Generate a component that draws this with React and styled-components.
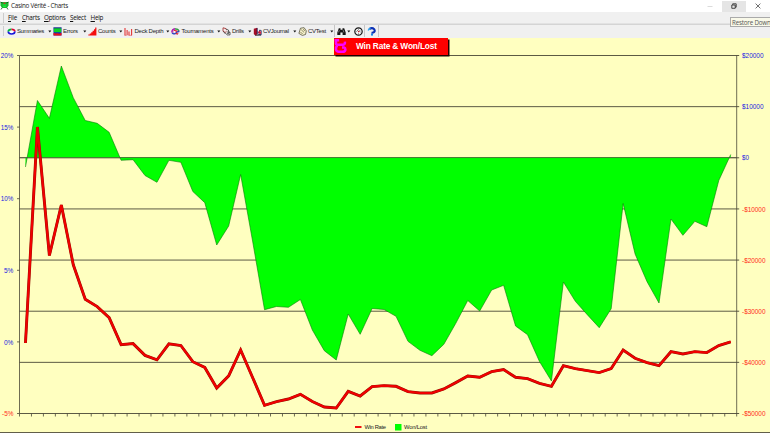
import React from "react";
import styled, { createGlobalStyle } from "styled-components";

const GlobalStyle = createGlobalStyle`
  body {
    margin: 0;
    overflow: hidden;
    background: #ffffc0;
  }
`;

const Window = styled.div`
  display: flex;
  flex-direction: column;
  position: relative;
  width: 770px;
  height: 433px;
  overflow: hidden;
  font-family: "Liberation Sans", Arial, sans-serif;
  white-space: nowrap;
`;

const TitleBar = styled.header`
  display: flex;
  flex: none;
  height: 12px;
  align-items: center;
  background: #fff;
`;

const AppTitle = styled.div`
  flex: 1;
  padding-left: 2px;
  font-family: "Open Sans", "Noto Sans", sans-serif;
  font-size: 6.3px;
  letter-spacing: -0.27px;
  line-height: 12px;
  color: #222;
`;

const WindowButton = styled.div`
  display: flex;
  width: 24px;
  height: 11px;
  justify-content: center;
  align-items: center;
  background: ${(props) => (props.$active ? "#e5e5e5" : "transparent")};
`;

const MenuBar = styled.nav`
  display: flex;
  flex: none;
  box-sizing: border-box;
  height: 12px;
  padding-left: 3px;
  align-items: center;
  background: #f0f0f0;
  border-bottom: 1px solid #e2e2e2;
`;

const MenuItem = styled.div`
  width: ${(props) => props.$width}px;
  font-family: "Open Sans", "Noto Sans", sans-serif;
  font-size: 6.3px;
  letter-spacing: -0.25px;
  line-height: 12px;
  color: #111;
`;

const Mnemonic = styled.span`
  text-decoration: underline;
  text-decoration-thickness: 0.5px;
`;

const ToolBar = styled.nav`
  display: flex;
  flex: none;
  box-sizing: border-box;
  height: 14px;
  padding: 0 0 1px 3px;
  align-items: center;
  background: #f0f0f0;
  border-top: 1px solid #d4d4d4;
`;

const Grip = styled.div`
  width: 1px;
  height: 10px;
  margin-right: ${(props) => props.$gap}px;
  background: #ccc;
`;

const Tool = styled.div`
  display: flex;
  box-sizing: border-box;
  width: ${(props) => props.$width}px;
  height: 12px;
  align-items: center;
  padding-right: ${(props) => props.$end || 0}px;
  border-right: ${(props) => (props.$divided ? "1px solid #c6c6c6" : "none")};
`;

const ToolLabel = styled.div`
  flex: 1;
  padding-left: 1.5px;
  font-size: 6px;
  letter-spacing: ${(props) => props.$spacing || -0.25}px;
  line-height: 12px;
  color: #222;
`;

const ChartArea = styled.main`
  flex: 1;
  background: #ffffc0;
`;

const ChartSvg = styled.svg`
  display: block;
  font-family: "Liberation Sans", Arial, sans-serif;
`;

const AxisText = styled.text`
  font-size: 7.6px;
  fill: ${(props) => (props.$negative ? "#ff2a18" : "#2020e0")};
`;

const LegendText = styled.text`
  font-size: 5.8px;
  fill: #222;
`;

const Banner = styled.div`
  display: flex;
  position: absolute;
  left: 334px;
  top: 38px;
  width: 113.5px;
  height: 16.5px;
  align-items: center;
  background: #f00;
  box-shadow: 1.5px 1.5px 0 #200;
  color: #fff;
`;

const BannerText = styled.div`
  padding-left: 9px;
  font-size: 8.3px;
  font-weight: bold;
  letter-spacing: -0.15px;
  line-height: 16px;
`;

const Tooltip = styled.div`
  position: absolute;
  box-sizing: border-box;
  left: 730px;
  top: 17px;
  width: 40px;
  height: 10px;
  padding-left: 1px;
  border: 1px solid #aaa;
  border-right: none;
  background: #f9f9e9;
  font-family: "Open Sans", "Noto Sans", sans-serif;
  font-size: 6.2px;
  letter-spacing: -0.17px;
  line-height: 9px;
  color: #555;
`;

const Icon = ({ children, width = 9 }) => (
  <svg width={width} height="9" viewBox={`0 0 ${width} 9`}>
    {children}
  </svg>
);

const Arrow = () => (
  <svg width="4" height="3" viewBox="0 0 4 3">
    <path d="M.3 .6h3L1.8 2.4z" fill="#111" />
  </svg>
);

const AppIcon = () => (
  <svg width="9" height="10" viewBox="0 0 9 10">
    <path d="M0.5 1h8v3.5l-1.5 2.5h-5l-1.5-2.5z" fill="#18b832" />
    <path d="M0.5 1l2 1M8.5 1l-2 1M2 7l-1 1.5M7 7l1 1.5" stroke="#064818" strokeWidth="0.8" />
    <path d="M3 1.8h3l-1.5 1.5z" fill="#e82020" />
    <path d="M2.5 4h4M3 5.5h3" stroke="#16ee3b" />
  </svg>
);

const SummariesIcon = () => (
  <Icon>
    <ellipse cx="4.5" cy="4.7" rx="3" ry="2" fill="#fff" />
    <g fill="none" strokeWidth="1.7">
      <path d="M1.2 4.7C1.4 2.6 3 2.3 4.5 2.3" stroke="#00b83c" />
      <path d="M4.5 2.3C6.7 2.3 7.8 3.4 7.8 4.6" stroke="#e00030" />
      <path d="M7.8 4.6C7.8 6.2 6.4 7 4.6 7S1.4 6.2 1.2 4.7" stroke="#1515db" />
    </g>
  </Icon>
);

const ErrorsIcon = () => (
  <Icon>
    <rect x="0.5" y="0.5" width="8" height="8" fill="#1f28b8" />
    <path d="M0.8 1.2h7.4v4H.8z" fill="#08d426" />
    <path d="M0.5 5.8l2 .7 2-.3 2 .5 2-.9v2.7h-8z" fill="#ee1010" />
    <path d="M.5 .8h8" stroke="#102c70" strokeWidth=".6" />
  </Icon>
);

const CountsIcon = () => (
  <Icon>
    <path d="M0.3 8.5v-1h1.5V6.4h1.4V5.2h1.4V3.7H6V2.2h1.2V.6h1.2v7.9z" fill="#f40d0d" />
  </Icon>
);

const DeckIcon = () => (
  <Icon>
    <path d="M1 8.3V1M3.1 8.3V3M5 8.3V4.4M7.6 8.3V2" stroke="#e33636" strokeWidth="1.1" />
    <path d="M0.5 8.3h2M4.5 8.3H8" stroke="#e33636" strokeWidth="0.6" />
  </Icon>
);

const TournamentsIcon = () => (
  <Icon>
    <ellipse cx="4.5" cy="4.4" rx="4" ry="3" fill="#d6a4c8" />
    <path d="M0.9 5.6Q1 2 4 1.8" fill="none" stroke="#b01db5" strokeWidth="1.5" />
    <path d="M4 1.8q3-.2 4 2" fill="none" stroke="#24a83c" strokeWidth="1.3" />
    <path d="M1 5.9q2 2 4 0T8.4 4.4" fill="none" stroke="#2747c3" strokeWidth="1.2" />
    <path d="M3 3.4l3 1M5 6.4l2 .7" stroke="#e82727" strokeWidth="1.3" />
    <circle cx="3.6" cy="4.8" r=".9" fill="#fff" />
  </Icon>
);

const DrillsIcon = () => (
  <Icon>
    <path d="M1 .8l3 .8 1 3-2 .8-2-1.3z" fill="#f5ecec" stroke="#9b2525" strokeWidth=".8" />
    <path d="M4 2.2l2.4.8.6 3.2-2 .6M4.8 5l3.2.2v2.7H5.3L3.7 6.4" fill="#fff" stroke="#333" strokeWidth=".8" />
    <path d="M1.3 4.4L3.6 7" stroke="#222" strokeWidth=".7" />
  </Icon>
);

const JournalIcon = () => (
  <Icon>
    <path d="M.8 1.7L4.2.7v6.8L2.2 8.4.8 7z" fill="#a40d25" />
    <path d="M4.2 1v6l4 .8V3.5L6.5 3.2V6L4.2 5" fill="#f8f8ff" stroke="#181850" strokeWidth=".8" />
    <path d="M2.2 8.3l5.8-.2" stroke="#111" strokeWidth=".8" />
    <path d="M5.5 4l2.4.6v2.5l-2.4-.5z" fill="#d51734" />
  </Icon>
);

const TestIcon = () => (
  <Icon>
    <path d="M2.5 1.2l3.6-.5 2.2 3.2-.8 3.6-3.2.9-3.4-2z" fill="#f8f4d0" stroke="#55533c" strokeWidth=".8" />
    <path d="M3.2 2.7l3 2.8M2.4 5.3l2.3 1.4M5.3 2.1l1.5 2" stroke="#625c3a" strokeWidth=".7" />
  </Icon>
);

const BinocularsIcon = () => (
  <Icon>
    <path d="M1.8 1.2h1.7v1.5h2V1.2h1.7l1.5 4.2v2.5H5.6V5.5H3.4v2.4H.3V5.4z" fill="#161616" />
    <path d="M2.3 3.2L1.5 5.4M6.2 3.2l.7 2.2" stroke="#b9b9b9" strokeWidth=".6" />
  </Icon>
);

const ClockIcon = () => (
  <Icon>
    <circle cx="4.5" cy="4.5" r="3.7" fill="#fafafa" stroke="#171717" strokeWidth="1.2" />
    <path d="M2.9 3l1.6 1.5 1.8-1M4.5 1.8v.9M4.5 6.4v.8M1.9 4.6h.8M6.4 5h.7" fill="none" stroke="#333" strokeWidth=".7" />
    <circle cx="4.7" cy="4.6" r=".8" fill="#b51d2b" />
  </Icon>
);

const HelpIcon = () => (
  <Icon>
    <path d="M2.2 2.2Q5 .2 7.2 2.2q1.4 2.2-1 3.4-1.2.3-1.7.3" fill="none" stroke="#0b2fb4" strokeWidth="2.1" />
    <path d="M1.2 3.4q.6-1.7 2.3-2.2" fill="none" stroke="#2ba5ef" strokeWidth="1.4" />
    <circle cx="5" cy="7.7" r="1.1" fill="#1480e6" />
  </Icon>
);

const menus = [
  ["File", 14],
  ["Charts", 22],
  ["Options", 26],
  ["Select", 20.5],
  ["Help", 20],
];

const tools = [
  { label: "Summaries", width: 46, icon: <SummariesIcon />, spacing: -0.4 },
  { label: "Errors", width: 35, icon: <ErrorsIcon /> },
  { label: "Counts", width: 36.5, icon: <CountsIcon /> },
  { label: "Deck Depth", width: 47, icon: <DeckIcon /> },
  { label: "Tournaments", width: 50.5, icon: <TournamentsIcon /> },
  { label: "Drills", width: 31, icon: <DrillsIcon /> },
  { label: "CVJournal", width: 45, icon: <JournalIcon /> },
  { label: "CVTest", width: 37, icon: <TestIcon />, divided: true },
];

// Chart geometry, in window pixels
const LEFT = 19.5;
const RIGHT = 736.7;
const TOP = 55.5;
const BOTTOM = 413.5;
const ZERO = 157.6;
const STEP = (RIGHT - LEFT) / 60;

const wonLost = [
  167, 100.5, 118.3, 66, 97.7, 120.5, 123.3, 132.3, 160.3, 159.7,
  175.5, 182.3, 160.3, 162.3, 191.5, 202.7, 245, 226, 174.5, 241,
  309.7, 306.5, 307.3, 299.5, 330, 350.7, 360, 314, 334.3, 308.5,
  309.5, 316.3, 341.3, 350.3, 355.7, 344.3, 323.3, 300.5, 311, 290,
  285.3, 326, 334.7, 361.5, 381, 282, 301.3, 314.7, 327.7, 308.7,
  203.5, 254, 281.7, 303, 219, 235.3, 221.3, 226.7, 180.5, 154.5,
];

const winRate = [
  343, 127, 255.5, 205, 264.8, 299.3, 306.6, 317.7, 344.7, 343.6,
  355.4, 359.8, 343.9, 345.5, 361.7, 367.4, 388, 375.8, 350, 377.5,
  405.3, 401.7, 399, 394.3, 401.5, 407, 408, 391.3, 396, 386.6,
  385.6, 386.3, 391.6, 393, 393, 389, 382.6, 376, 377.3, 371.6,
  369.6, 377.3, 378.6, 383.3, 386.3, 365.7, 368.6, 370.6, 372.6, 368.6,
  350, 358.3, 362.6, 365.6, 351.7, 354, 351.6, 352.6, 345.5, 341.8,
];

const xAt = (i) => LEFT + STEP * (i + 0.5);
const toPoints = (values) => values.map((y, i) => `${xAt(i)},${y}`).join(" ");

const leftLabels = ["20%", "15%", "10%", "5%", "0%", "-5%"];
const rightLabels = ["$20000", "$10000", "$0", "-$10000", "-$20000", "-$30000", "-$40000", "-$50000"];

const leftY = (i) => TOP + ((BOTTOM - TOP) * i) / 5;
const rightY = (i) => TOP + ((BOTTOM - TOP) * i) / 7;

function Chart() {
  return (
    <ChartSvg width="770" height="395" viewBox="0 38 770 395">
      <g stroke="#4a4736" strokeWidth="0.9">
        {rightLabels.map((label, i) => (
          <line key={label} x1={LEFT} x2={RIGHT + 2.5} y1={rightY(i)} y2={rightY(i)} />
        ))}
      </g>
      <polygon
        points={`${xAt(0)},${ZERO} ${toPoints(wonLost)} ${xAt(59)},${ZERO}`}
        fill="#0f0"
      />
      <polyline points={toPoints(wonLost)} fill="none" stroke="#087b08" strokeWidth="0.6" />
      <g stroke="#4a4736" strokeWidth="0.8">
        <line x1={LEFT} x2={RIGHT} y1={ZERO} y2={ZERO} strokeWidth="0.6" />
        <line x1={LEFT} x2={LEFT} y1={TOP} y2={BOTTOM} />
        <line x1={RIGHT} x2={RIGHT} y1={TOP} y2={BOTTOM} />
        {leftLabels.map((label, i) => (
          <line key={label} x1={LEFT - 2.5} x2={LEFT} y1={leftY(i)} y2={leftY(i)} />
        ))}
        {Array.from({ length: 61 }, (_, i) => (
          <line key={i} x1={LEFT + STEP * i} x2={LEFT + STEP * i} y1={BOTTOM} y2={BOTTOM + 3} />
        ))}
      </g>
      <polyline points={toPoints(winRate)} fill="none" stroke="#8c1000" strokeWidth="2.9" />
      <polyline points={toPoints(winRate)} fill="none" stroke="#f00000" strokeWidth="2.2" />

      {leftLabels.map((label, i) => (
        <AxisText
          key={label}
          x={i === 5 ? 2 : i > 2 ? 4 : 0.8}
          y={leftY(i) + 2.7}
          textLength={i === 5 ? 11.4 : i > 2 ? 9.4 : 12.6}
          lengthAdjust="spacingAndGlyphs"
          $negative={i === 5}
        >
          {label}
        </AxisText>
      ))}
      {rightLabels.map((label, i) => (
        <AxisText
          key={label}
          x="742"
          y={rightY(i) + 2.7}
          textLength={i < 2 ? 21.5 : i === 2 ? 7 : 23.5}
          lengthAdjust="spacingAndGlyphs"
          $negative={i > 2}
        >
          {label}
        </AxisText>
      ))}

      <rect x="355" y="426" width="6.5" height="2" fill="#f01010" />
      <LegendText x="364.5" y="429" textLength="21.5">Win Rate</LegendText>
      <rect x="395" y="424" width="6.5" height="6.5" fill="#0f0" />
      <LegendText x="404" y="429" textLength="23">Won/Lost</LegendText>
      <rect x="0" y="432" width="770" height="1" fill="#625f4a" />
    </ChartSvg>
  );
}

export default function App() {
  return (
    <Window>
      <GlobalStyle />
      <TitleBar>
        <AppIcon />
        <AppTitle>Casino Vérité - Charts</AppTitle>
        <WindowButton>
          <svg width="6" height="6" viewBox="0 0 6 6">
            <path d="M0.5 3.5h5" stroke="#ccc" strokeWidth="0.7" />
          </svg>
        </WindowButton>
        <WindowButton $active>
          <svg width="6" height="6" viewBox="0 0 6 6">
            <path d="M1.7 1.8V.8h3.5v3.4h-1M.8 2h3.4v3.3H.8z" fill="none" stroke="#222" strokeWidth="0.8" />
          </svg>
        </WindowButton>
        <WindowButton>
          <svg width="6" height="6" viewBox="0 0 6 6">
            <path d="M.6 .6l4.8 4.8M5.4 .6L.6 5.4" stroke="#333" strokeWidth="0.7" />
          </svg>
        </WindowButton>
      </TitleBar>
      <MenuBar>
        <Grip $gap={4} />
        {menus.map(([label, width]) => (
          <MenuItem key={label} $width={width}>
            <Mnemonic>{label[0]}</Mnemonic>
            {label.slice(1)}
          </MenuItem>
        ))}
      </MenuBar>
      <ToolBar>
        <Grip $gap={2.5} />
        {tools.map(({ label, width, icon, divided, spacing }) => (
          <Tool key={label} $width={width} $divided={divided} $end={divided ? 0 : 1}>
            {icon}
            <ToolLabel $spacing={spacing}>{label}</ToolLabel>
            <Arrow />
          </Tool>
        ))}
        <Tool $width={18}>
          <Icon width={2.5} />
          <BinocularsIcon />
          <Icon width={1} />
          <Arrow />
        </Tool>
        <Tool $width={12.5} $divided>
          <Icon width={1} />
          <ClockIcon />
        </Tool>
        <Tool $width={13.5} $divided>
          <Icon width={1.5} />
          <HelpIcon />
        </Tool>
      </ToolBar>
      <ChartArea>
        <Chart />
      </ChartArea>
      <Banner>
        <svg width="13" height="16" viewBox="0 0 13 16">
          <path
            d="M.5 2.3h4.6M2 2.5v3q0 1.4 1.8 1.3H9q2.3-.2 1.9-3.2M3.2 7.4q-1.5 1.8-1.2 4 .3 2.4 2.8 2.4h3.4q3.2 0 3.2-2.4 0-1.7-1.4-2H8"
            fill="none"
            stroke="#f0f"
            strokeWidth="2.5"
          />
        </svg>
        <BannerText>Win Rate &amp; Won/Lost</BannerText>
      </Banner>
      <Tooltip>Restore Down</Tooltip>
    </Window>
  );
}
